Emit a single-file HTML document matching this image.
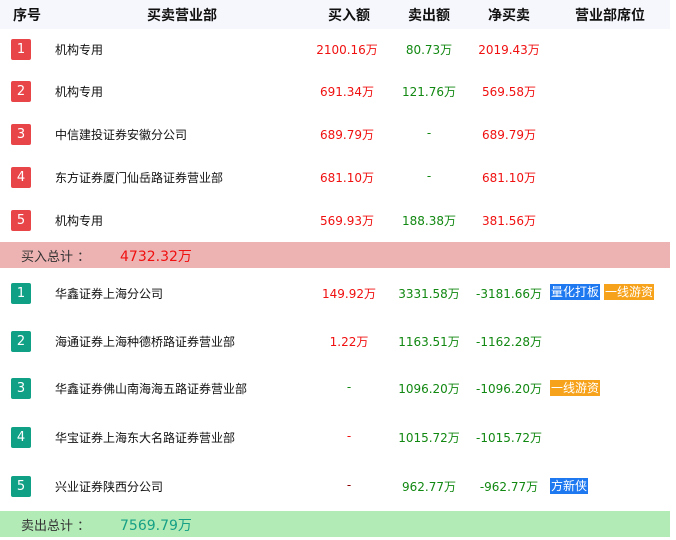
<!DOCTYPE html>
<html><head><meta charset="utf-8"><style>
*{margin:0;padding:0;box-sizing:border-box}
body{width:676px;height:540px;background:#fff;position:relative;overflow:hidden;font-family:"DejaVu Sans","Noto Sans CJK SC",sans-serif;font-size:12px;color:#111}
.a{position:absolute;white-space:nowrap}
.c{transform:translateX(-50%)}
.hd{position:absolute;left:0;top:0;width:670px;height:29px;background:#f6f7fc}
.h{font-size:14px;font-weight:bold;top:5px}
.b{position:absolute;left:11px;width:20px;height:21px;border-radius:2px;color:#fff;text-align:center;line-height:22px;font-size:13px}
.r{background:#e84549}.g{background:#10a085}
.red{color:#f01010}.grn{color:#118811}.dk{color:#8a0000}
.tag{position:absolute;height:16px;line-height:16px;padding:0 1px;color:#fff;font-size:12px}
.bl{background:#1e78f0}.or{background:#f7a21b}
</style></head><body>
<div class="hd"></div>
<div class="a c h" style="left:27px">序号</div>
<div class="a c h" style="left:182px">买卖营业部</div>
<div class="a c h" style="left:349px">买入额</div>
<div class="a c h" style="left:429px">卖出额</div>
<div class="a c h" style="left:509px">净买卖</div>
<div class="a c h" style="left:610px">营业部席位</div>

<div class="b r" style="top:39px">1</div><div class="a" style="left:55px;top:41px">机构专用</div>
<div class="a c red" style="left:347px;top:41px">2100.16万</div><div class="a c grn" style="left:429px;top:41px">80.73万</div><div class="a c red" style="left:509px;top:41px">2019.43万</div>

<div class="b r" style="top:81px">2</div><div class="a" style="left:55px;top:83px">机构专用</div>
<div class="a c red" style="left:347px;top:83px">691.34万</div><div class="a c grn" style="left:429px;top:83px">121.76万</div><div class="a c red" style="left:509px;top:83px">569.58万</div>

<div class="b r" style="top:124px">3</div><div class="a" style="left:55px;top:126px">中信建投证券安徽分公司</div>
<div class="a c red" style="left:347px;top:126px">689.79万</div><div class="a c grn" style="left:429px;top:126px">-</div><div class="a c red" style="left:509px;top:126px">689.79万</div>

<div class="b r" style="top:167px">4</div><div class="a" style="left:55px;top:169px">东方证券厦门仙岳路证券营业部</div>
<div class="a c red" style="left:347px;top:169px">681.10万</div><div class="a c grn" style="left:429px;top:169px">-</div><div class="a c red" style="left:509px;top:169px">681.10万</div>

<div class="b r" style="top:210px">5</div><div class="a" style="left:55px;top:212px">机构专用</div>
<div class="a c red" style="left:347px;top:212px">569.93万</div><div class="a c grn" style="left:429px;top:212px">188.38万</div><div class="a c red" style="left:509px;top:212px">381.56万</div>

<div style="position:absolute;left:0;top:242px;width:670px;height:26px;background:#edb3b3"></div>
<div class="a" style="left:21px;top:246px;font-size:13px;color:#333">买入总计 ：</div>
<div class="a" style="left:120px;top:246px;font-size:14px;color:#f01010">4732.32万</div>

<div class="b g" style="top:283px">1</div><div class="a" style="left:55px;top:285px">华鑫证券上海分公司</div>
<div class="a c red" style="left:349px;top:285px">149.92万</div><div class="a c grn" style="left:429px;top:285px">3331.58万</div><div class="a c grn" style="left:509px;top:285px">-3181.66万</div>
<div class="tag bl" style="left:550px;top:284px">量化打板</div><div class="tag or" style="left:604px;top:284px">一线游资</div>

<div class="b g" style="top:331px">2</div><div class="a" style="left:55px;top:333px">海通证券上海种德桥路证券营业部</div>
<div class="a c red" style="left:349px;top:333px">1.22万</div><div class="a c grn" style="left:429px;top:333px">1163.51万</div><div class="a c grn" style="left:509px;top:333px">-1162.28万</div>

<div class="b g" style="top:378px">3</div><div class="a" style="left:55px;top:380px">华鑫证券佛山南海海五路证券营业部</div>
<div class="a c grn" style="left:349px;top:380px">-</div><div class="a c grn" style="left:429px;top:380px">1096.20万</div><div class="a c grn" style="left:509px;top:380px">-1096.20万</div>
<div class="tag or" style="left:550px;top:380px">一线游资</div>

<div class="b g" style="top:427px">4</div><div class="a" style="left:55px;top:429px">华宝证券上海东大名路证券营业部</div>
<div class="a c red" style="left:349px;top:429px">-</div><div class="a c grn" style="left:429px;top:429px">1015.72万</div><div class="a c grn" style="left:509px;top:429px">-1015.72万</div>

<div class="b g" style="top:476px">5</div><div class="a" style="left:55px;top:478px">兴业证券陕西分公司</div>
<div class="a c dk" style="left:349px;top:478px">-</div><div class="a c grn" style="left:429px;top:478px">962.77万</div><div class="a c grn" style="left:509px;top:478px">-962.77万</div>
<div class="tag bl" style="left:550px;top:478px">方新侠</div>

<div style="position:absolute;left:0;top:511px;width:670px;height:26px;background:#b3ebb7"></div>
<div class="a" style="left:21px;top:515px;font-size:13px;color:#333">卖出总计 ：</div>
<div class="a" style="left:120px;top:515px;font-size:14px;color:#16a085">7569.79万</div>
</body></html>
